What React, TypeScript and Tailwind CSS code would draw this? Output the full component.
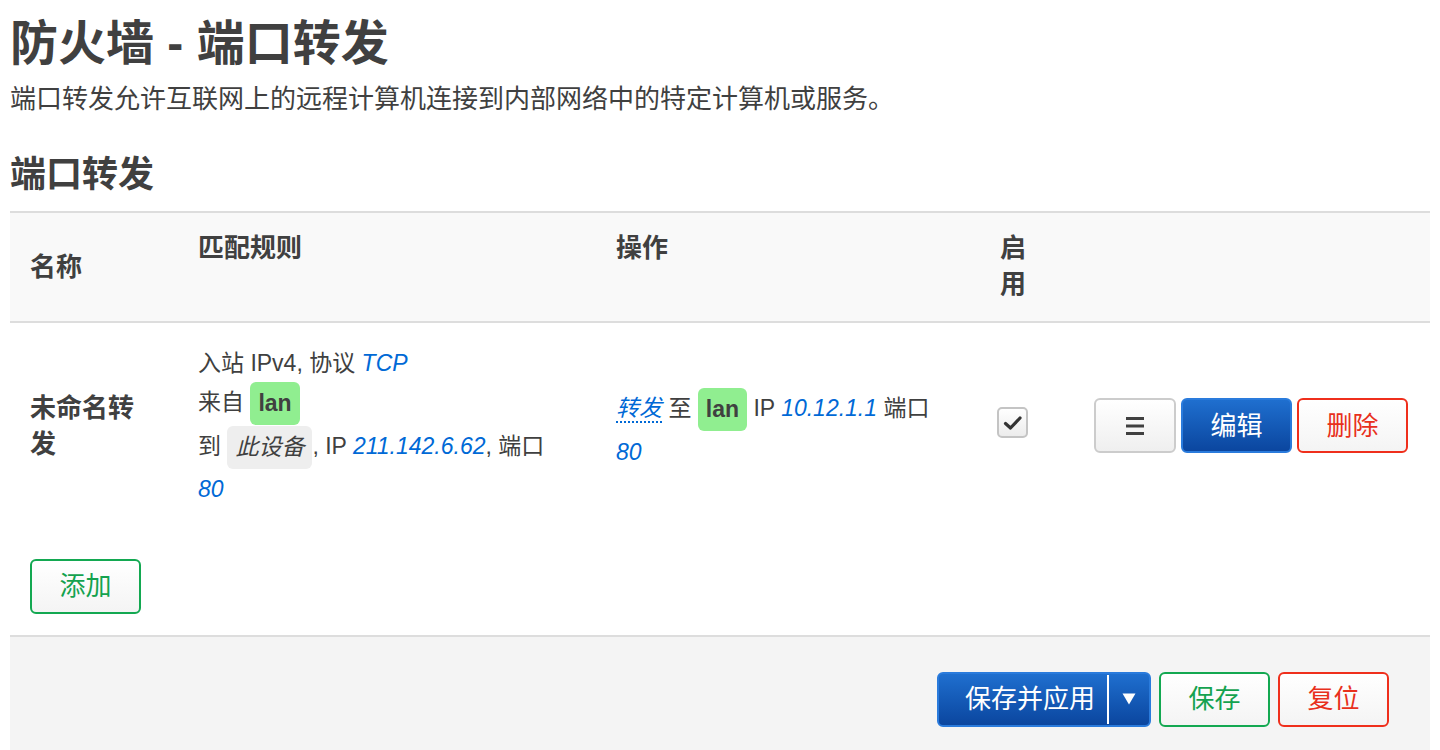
import React from 'react'

const FONT = { fontFamily: '"Liberation Sans", "Noto Sans CJK SC", sans-serif' }

// Inline badge for zones / device
const Badge = ({ children, tone }: { children: React.ReactNode; tone: 'green' | 'gray' }) => (
  <span
    className={`inline-block align-middle rounded-[6px] px-[8px] leading-[43px] my-[0.5px] ${
      tone === 'green' ? 'bg-[#90ee90] font-bold' : 'bg-[#eeeeee] italic'
    }`}
  >
    {children}
  </span>
)

const Val = ({ children }: { children: React.ReactNode }) => (
  <em className="italic text-[#0069d6]">{children}</em>
)

const btnBase =
  'h-[55px] rounded-[6px] border-2 text-[26px] leading-none flex items-center justify-center'

export default function App() {
  return (
    <div className="min-h-[750px] bg-white text-[#404040]" style={FONT}>
      <div className="px-[10px] pt-[15px]">
        <h1 className="text-[48px] font-bold leading-[1.2]">防火墙 - 端口转发</h1>
        <p className="mt-[7px] text-[26px] leading-[39px]">
          端口转发允许互联网上的远程计算机连接到内部网络中的特定计算机或服务。
        </p>
        <h2 className="mt-[34px] text-[36px] font-bold leading-[1.2]">端口转发</h2>

        {/* Table */}
        <div className="mt-[15px] border-t-2 border-[#dddddd]">
          {/* Header */}
          <div className="grid grid-cols-[168px_418px_384px_71px_1fr] bg-[#f9f9f9] border-b-2 border-[#dddddd] text-[26px] font-bold leading-[36px]">
            <div className="px-[20px] self-center">名称</div>
            <div className="px-[20px] pt-[17px] pb-[19px]">匹配规则</div>
            <div className="px-[20px] pt-[17px] pb-[19px]">操作</div>
            <div className="px-[20px] pt-[17px] pb-[19px]">启用</div>
            <div />
          </div>

          {/* Row */}
          <div className="grid grid-cols-[168px_418px_384px_71px_1fr] items-center pt-[21px] pb-[8px] text-[23px]">
            <div className="px-[20px] text-[26px] font-bold leading-[36px]">未命名转发</div>
            <div className="px-[20px] leading-[38px]">
              <div>
                入站 IPv4, 协议 <Val>TCP</Val>
              </div>
              <div>
                来自 <Badge tone="green">lan</Badge>
              </div>
              <div>
                到 <Badge tone="gray">此设备</Badge>, IP <Val>211.142.6.62</Val>, 端口 <Val>80</Val>
              </div>
            </div>
            <div className="px-[20px] pt-[8px] leading-[40px]">
              <span className="italic text-[#0069d6] border-b-2 border-dotted border-[#0069d6] leading-none">转发</span> 至{' '}
              <Badge tone="green">lan</Badge> IP <Val>10.12.1.1</Val> 端口 <Val>80</Val>
            </div>
            <div className="pl-[17px] pb-[6px]">
              <span className="flex h-[31px] w-[31px] items-center justify-center rounded-[5px] border-2 border-[#c4c4c4] bg-gradient-to-b from-white to-[#ececec]">
                <svg width="20" height="18" viewBox="0 0 20 18">
                  <path d="M2.5 9.5 L7.5 14 L17 4" fill="none" stroke="#333" strokeWidth="3.2" strokeLinecap="round" strokeLinejoin="round" />
                </svg>
              </span>
            </div>
            <div className="flex justify-end gap-[5px] pr-[22px]">
              <button className={`${btnBase} w-[82px] border-[#cccccc] bg-gradient-to-b from-white to-[#efefef]`}>
                <svg width="22" height="22" viewBox="0 0 22 22">
                  <path d="M2 3.5 H20 M2 11 H20 M2 18.5 H20" stroke="#404040" strokeWidth="3" />
                </svg>
              </button>
              <button className={`${btnBase} w-[111px] border-[#2a7bdc] bg-gradient-to-b from-[#1f6fcf] to-[#0b469f] text-white`}>
                编辑
              </button>
              <button className={`${btnBase} w-[111px] border-[#ef2f1c] bg-gradient-to-b from-white to-[#f4f4f4] text-[#e8301c]`}>
                删除
              </button>
            </div>
          </div>

          {/* Add */}
          <div className="px-[20px] pt-[43px] pb-[21px]">
            <button className={`${btnBase} w-[111px] border-[#13a851] bg-gradient-to-b from-white to-[#f4f4f4] text-[#14a24f]`}>
              添加
            </button>
          </div>
        </div>

        {/* Footer actions */}
        <div className="border-t-2 border-[#dddddd] bg-[#f4f4f4] pt-[35px] pb-[30px] pr-[41px] flex justify-end gap-[8px]">
          <div className="flex h-[55px] w-[214px] rounded-[6px] border-2 border-[#2a7bdc] bg-gradient-to-b from-[#1f6fcf] to-[#0b469f] text-white">
            <button className="flex-1 pl-[14px] text-[26px] leading-none flex items-center justify-center">保存并应用</button>
            <div className="my-[1px] w-[2px] bg-white" />
            <button className="w-[40px] flex items-center justify-center">
              <svg width="14" height="12" viewBox="0 0 14 12">
                <path d="M0.5 0.5 H13.5 L7 11.5 Z" fill="#ffffff" />
              </svg>
            </button>
          </div>
          <button className={`${btnBase} w-[111px] border-[#13a851] bg-gradient-to-b from-white to-[#f4f4f4] text-[#14a24f]`}>
            保存
          </button>
          <button className={`${btnBase} w-[111px] border-[#ef2f1c] bg-gradient-to-b from-white to-[#f4f4f4] text-[#e8301c]`}>
            复位
          </button>
        </div>
      </div>
    </div>
  )
}
